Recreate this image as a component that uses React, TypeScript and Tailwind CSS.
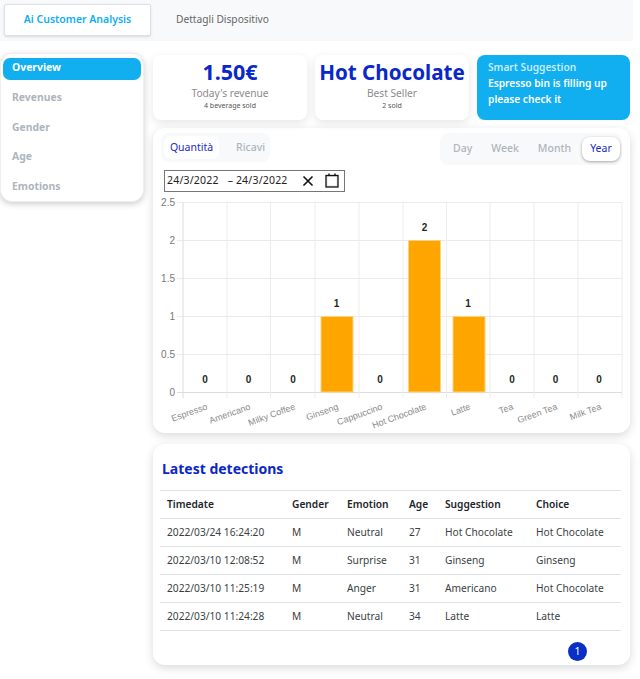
const xs = [183, 227, 270.5, 315, 359, 403, 446.5, 490, 534, 578, 622];
const ys = [
  { v: "2.5", y: 202.5 },
  { v: "2", y: 240.5 },
  { v: "1.5", y: 278.5 },
  { v: "1", y: 316.5 },
  { v: "0.5", y: 354.5 },
  { v: "0", y: 392.5 },
];
const labels = [
  { t: "Espresso", x: 208, v: "0", vx: 205, vy: 383 },
  { t: "Americano", x: 251, v: "0", vx: 248.5, vy: 383 },
  { t: "Milky Coffee", x: 296, v: "0", vx: 293, vy: 383 },
  { t: "Ginseng", x: 339, v: "1", vx: 336.5, vy: 307 },
  { t: "Cappuccino", x: 383, v: "0", vx: 380, vy: 383 },
  { t: "Hot Chocolate", x: 427, v: "2", vx: 424.5, vy: 231 },
  { t: "Latte", x: 471, v: "1", vx: 468, vy: 307 },
  { t: "Tea", x: 514, v: "0", vx: 512, vy: 383 },
  { t: "Green Tea", x: 558, v: "0", vx: 555.5, vy: 383 },
  { t: "Milk Tea", x: 602, v: "0", vx: 599, vy: 383 },
];
const bars = [
  { x: 321, w: 32, y: 316.5 },
  { x: 408.5, w: 32, y: 240.5 },
  { x: 453, w: 32, y: 316.5 },
];
const rows = [
  ["2022/03/24 16:24:20", "M", "Neutral", "27", "Hot Chocolate", "Hot Chocolate"],
  ["2022/03/10 12:08:52", "M", "Surprise", "31", "Ginseng", "Ginseng"],
  ["2022/03/10 11:25:19", "M", "Anger", "31", "Americano", "Hot Chocolate"],
  ["2022/03/10 11:24:28", "M", "Neutral", "34", "Latte", "Latte"],
];
const headers = ["Timedate", "Gender", "Emotion", "Age", "Suggestion", "Choice"];
const widths = ["w-[125px]", "w-[55px]", "w-[62px]", "w-[36px]", "w-[91px]", "w-[85px]"];

function Chart() {
  return (
    <svg width="477" height="238" viewBox="153 195 477 238" className="block" style={{ fontFamily: '"Liberation Sans", Arial, sans-serif' }}>
      {ys.map((l) => (
        <g key={l.v}>
          <line x1="177" x2="622" y1={l.y} y2={l.y} stroke={l.v === "0" ? "#dcdcdc" : "#ebebeb"} />
          <text x="175" y={l.y + 3} textAnchor="end" fontSize="10" fill="#777">{l.v}</text>
        </g>
      ))}
      {xs.map((x, i) => (
        <line key={x} x1={x} x2={x} y1="202" y2="398" stroke={i === 0 ? "#dcdcdc" : "#ededed"} />
      ))}
      {bars.map((b) => (
        <rect key={b.x} x={b.x} y={b.y} width={b.w} height={392 - b.y} fill="#ffa500" stroke="#ffd27f" strokeWidth="1" />
      ))}
      {labels.map((l) => (
        <g key={l.t}>
          <text x={l.vx} y={l.vy} textAnchor="middle" fontSize="10" fontWeight="700" fill="#1c2b1c">{l.v}</text>
          <text x={l.x} y="409" textAnchor="end" fontSize="9" fill="#8a8a8a" transform={`rotate(-20 ${l.x} 409)`}>{l.t}</text>
        </g>
      ))}
    </svg>
  );
}

export default function App() {
  return (
    <div className="w-[640px] h-[679px] overflow-hidden bg-white text-[#333] font-['Noto_Sans','Open_Sans',sans-serif]">
      <div className="w-[633px] h-[41px] bg-[#f8f9fa] pt-[4px] pl-[4px] flex">
        <div className="w-[147px] h-[32px] bg-white border border-[#dee2e6] rounded-[2px] shadow-sm flex items-center justify-center text-[10.5px] font-semibold text-[#11aef0]">
          Ai Customer Analysis
        </div>
        <div className="ml-[25px] h-[32px] flex items-center text-[10.2px] text-[#666]">Dettagli Dispositivo</div>
      </div>

      <div className="flex">
        <aside className="w-[144px] h-[149px] mt-[12px] bg-white rounded-[12px] border border-[#eee] shadow-[0_2px_6px_rgba(0,0,0,0.2)] pt-[4px] px-[2px] text-[10.4px] font-bold text-[#adb5bd] shrink-0">
          <div className="h-[22px] w-[138px] rounded-[7px] bg-[#11aef0] text-white flex items-center pl-[9px] pb-[3px]">Overview</div>
          <div className="h-[30px] mt-[3px] flex items-center pl-[9px]">Revenues</div>
          <div className="h-[30px] flex items-center pl-[9px]">Gender</div>
          <div className="h-[29px] flex items-center pl-[9px] pb-[1px]">Age</div>
          <div className="h-[30px] flex items-center pl-[9px]">Emotions</div>
        </aside>

        <main className="ml-[9px] w-[477px] pt-[14px] shrink-0">
          <div className="flex gap-[8px] h-[65px]">
            <div className="w-[154px] bg-white rounded-[8px] shadow-[0_3px_10px_rgba(0,0,0,0.1)] flex flex-col items-center pt-[3px]">
              <div className="text-[21.5px] leading-[28px] font-bold text-[#0a27c9]">1.50€</div>
              <div className="text-[10.2px] leading-[14px] text-[#8c8c8c]">Today's revenue</div>
              <div className="text-[7px] leading-[10px] mt-[1px] text-[#555]">4 beverage sold</div>
            </div>
            <div className="w-[154px] bg-white rounded-[8px] shadow-[0_3px_10px_rgba(0,0,0,0.1)] flex flex-col items-center pt-[3px]">
              <div className="text-[20.6px] leading-[28px] font-bold text-[#0a27c9] whitespace-nowrap">Hot Chocolate</div>
              <div className="text-[10.2px] leading-[14px] text-[#8c8c8c]">Best Seller</div>
              <div className="text-[7px] leading-[10px] mt-[1px] text-[#555]">2 sold</div>
            </div>
            <div className="w-[153px] bg-[#11aef0] rounded-[8px] text-[10.2px] font-semibold leading-[16px] pl-[11px] pt-[4px] text-white">
              <div className="text-[#c5ecfc]">Smart Suggestion</div>
              <div>Espresso bin is filling up</div>
              <div>please check it</div>
            </div>
          </div>

          <section className="mt-[8px] h-[305px] bg-white rounded-[12px] shadow-[0_3px_10px_rgba(0,0,0,0.15)]">
            <div className="flex justify-between pt-[5px] pl-[8px] pr-[8px] h-[42px]">
              <div className="w-[109px] h-[29px] bg-[#f8f9fa] rounded-[8px] flex items-center pl-[3px] text-[10.5px]">
                <div className="w-[55px] h-[23px] bg-white rounded-[7px] flex items-center justify-center pt-[1px] text-[#1c2bc4]">Quantità</div>
                <div className="ml-[17px] pt-[1px] font-medium text-[#adb5bd]">Ricavi</div>
              </div>
              <div className="w-[182px] h-[32px] bg-[#f8f9fa] rounded-[8px] flex items-center pb-[1px] text-[10.5px] font-medium text-[#adb5bd] relative">
                <span className="ml-[13px]">Day</span>
                <span className="ml-[19px]">Week</span>
                <span className="ml-[19px]">Month</span>
                <span className="absolute left-[142px] top-[4px] w-[38px] h-[24px] bg-white rounded-[8px] shadow-[0_1px_3px_rgba(0,0,0,0.35)] flex items-center justify-center font-normal text-[#1c2bc4]">Year</span>
              </div>
            </div>
            <div className="mt-0 ml-[11px] w-[181px] h-[22px] border border-[#767676] flex items-center text-[10.5px] text-[#222] pl-[2px] relative">
              <span className="tracking-[0.2px]">24/3/2022</span>
              <span className="ml-[9px]">–</span>
              <span className="ml-[3px] tracking-[0.2px]">24/3/2022</span>
              <svg width="12" height="12" viewBox="0 0 12 12" className="absolute left-[137px] top-[4px]">
                <path d="M1.5 1.5 10.5 10.5M10.5 1.5 1.5 10.5" stroke="#111" strokeWidth="1.6" />
              </svg>
              <svg width="14" height="15" viewBox="0 0 14 15" className="absolute left-[160px] top-[2px]">
                <rect x="1" y="2.5" width="12" height="11.5" fill="#e3e3e3" stroke="#111" strokeWidth="1.3" />
                <rect x="2.5" y="4" width="9" height="8.5" fill="#fff" />
                <path d="M4 0.5V2.5M10 0.5V2.5" stroke="#111" strokeWidth="1.4" />
              </svg>
            </div>
            <div className="mt-[3px]">
              <Chart />
            </div>
          </section>

          <section className="mt-[11px] h-[221px] bg-white rounded-[12px] shadow-[0_3px_10px_rgba(0,0,0,0.15)] px-[7px] relative">
            <h2 className="text-[14px] leading-[20px] font-bold text-[#0a27c9] pt-[15px] h-[46px] pl-[2px]">Latest detections</h2>
            <div className="border-t border-[#dee2e6] text-[10.2px] w-[461px]">
              <div className="flex h-[28px] items-center border-b border-[#dee2e6] pl-[7px] font-semibold text-[#212529]">
                {headers.map((h, i) => (
                  <div key={h} className={`${widths[i]} shrink-0`}>{h}</div>
                ))}
              </div>
              {rows.map((r) => (
                <div key={r[0]} className="flex h-[28px] items-center border-b border-[#dee2e6] pl-[7px] text-[#3a3f44]">
                  {r.map((c, i) => (
                    <div key={i} className={`${widths[i]} shrink-0`}>{c}</div>
                  ))}
                </div>
              ))}
            </div>
            <div className="absolute left-[415px] top-[198px] w-[19px] h-[19px] rounded-full bg-[#0a2fc4] text-white text-[10.5px] flex items-center justify-center">1</div>
          </section>
        </main>
      </div>
    </div>
  );
}
